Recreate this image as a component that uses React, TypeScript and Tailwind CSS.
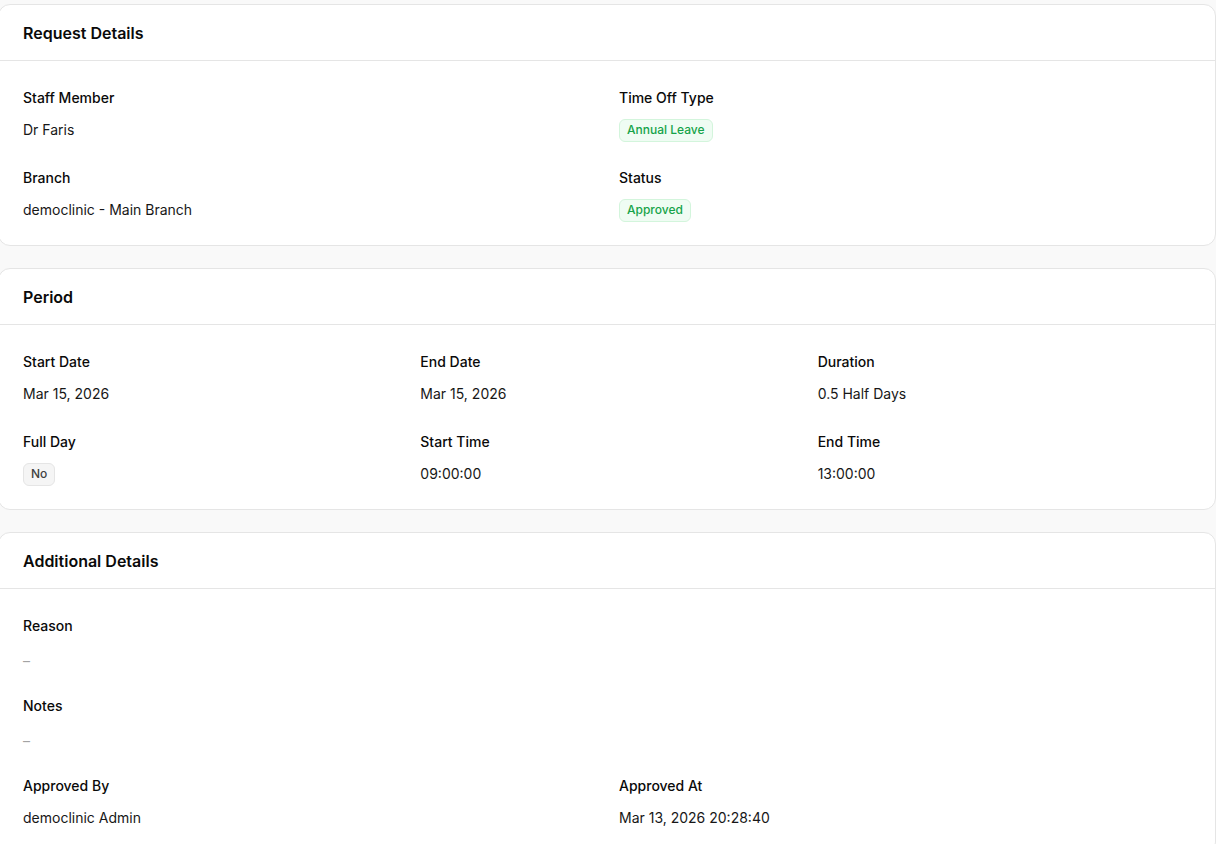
import type { ReactNode } from 'react';

type Field = {
  label: string;
  value: ReactNode;
  span?: string;
};

function Badge({ tone, children }: { tone: 'green' | 'gray'; children: ReactNode }) {
  const cls =
    tone === 'green'
      ? 'border-[#d3f5dc] bg-[#effcf3] text-[#16a34a]'
      : 'border-[#e5e5e5] bg-[#f5f5f5] text-[#404040]';
  return (
    <span
      className={`inline-flex h-[23px] items-center rounded-md border px-[7px] text-xs font-medium ${cls}`}
    >
      {children}
    </span>
  );
}

function Empty() {
  return <span className="pt-[6px] text-[#a3a3a3]">–</span>;
}

function Card({ title, cols, fields }: { title: string; cols: string; fields: Field[] }) {
  return (
    <section className="rounded-xl border border-[#e5e5e5] bg-white">
      <div className="flex h-[56px] items-center border-b border-[#e5e5e5] px-6">
        <h2 className="text-base font-semibold text-[#0a0a0a]">{title}</h2>
      </div>
      <div className={`grid gap-x-6 gap-y-6 px-6 pt-[27px] pb-[21px] ${cols}`}>
        {fields.map((f) => (
          <div key={f.label} className={f.span ?? ''}>
            <div className="text-sm leading-5 font-medium text-[#0a0a0a]">{f.label}</div>
            <div className="mt-2 flex h-7 items-center text-sm text-[#171717]">{f.value}</div>
          </div>
        ))}
      </div>
    </section>
  );
}

export default function App() {
  return (
    <div
      className="min-h-screen overflow-hidden bg-[#f9f9f9] pt-1"
      style={{ fontFamily: 'Inter, "Noto Sans", sans-serif' }}
    >
      <div className="-ml-[2px] flex w-[1218px] flex-col gap-[22px]">
        <Card
          title="Request Details"
          cols="grid-cols-2"
          fields={[
            { label: 'Staff Member', value: 'Dr Faris' },
            { label: 'Time Off Type', value: <Badge tone="green">Annual Leave</Badge> },
            { label: 'Branch', value: 'democlinic - Main Branch' },
            { label: 'Status', value: <Badge tone="green">Approved</Badge> }
          ]}
        />
        <Card
          title="Period"
          cols="grid-cols-3"
          fields={[
            { label: 'Start Date', value: 'Mar 15, 2026' },
            { label: 'End Date', value: 'Mar 15, 2026' },
            { label: 'Duration', value: '0.5 Half Days' },
            { label: 'Full Day', value: <Badge tone="gray">No</Badge> },
            { label: 'Start Time', value: '09:00:00' },
            { label: 'End Time', value: '13:00:00' }
          ]}
        />
        <Card
          title="Additional Details"
          cols="grid-cols-2"
          fields={[
            { label: 'Reason', value: <Empty />, span: 'col-span-2' },
            { label: 'Notes', value: <Empty />, span: 'col-span-2' },
            { label: 'Approved By', value: 'democlinic Admin' },
            { label: 'Approved At', value: 'Mar 13, 2026 20:28:40' }
          ]}
        />
      </div>
    </div>
  );
}
